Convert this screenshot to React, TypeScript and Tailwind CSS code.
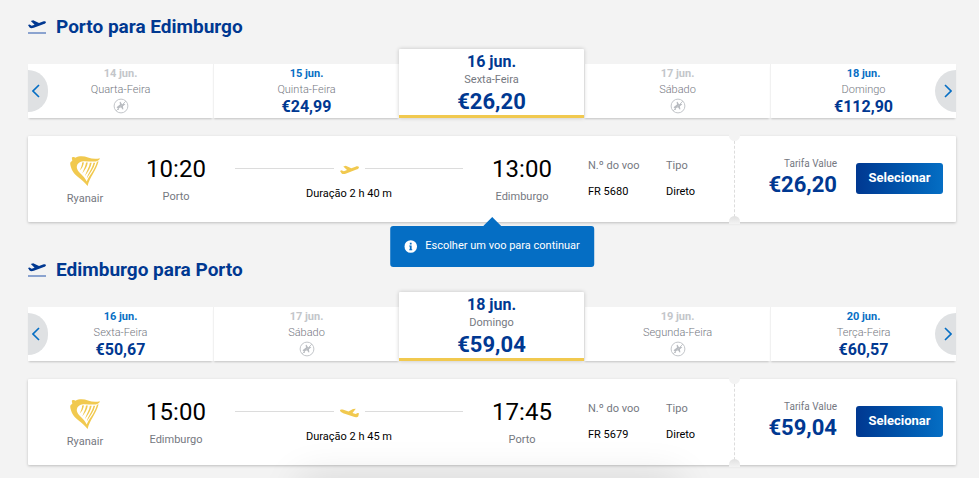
import React from "react";
import clsx from "clsx";

type Day = { date: string; weekday: string; price?: string; selected?: boolean };

type Flight = {
  title: string;
  days: Day[];
  departure: string;
  from: string;
  arrival: string;
  to: string;
  duration: string;
  number: string;
  price: string;
  landing?: boolean;
};

const flights: Flight[] = [
  {
    title: "Porto para Edimburgo",
    days: [
      { date: "14 jun.", weekday: "Quarta-Feira" },
      { date: "15 jun.", weekday: "Quinta-Feira", price: "€24,99" },
      { date: "16 jun.", weekday: "Sexta-Feira", price: "€26,20", selected: true },
      { date: "17 jun.", weekday: "Sábado" },
      { date: "18 jun.", weekday: "Domingo", price: "€112,90" },
    ],
    departure: "10:20",
    from: "Porto",
    arrival: "13:00",
    to: "Edimburgo",
    duration: "Duração 2 h 40 m",
    number: "FR 5680",
    price: "€26,20",
  },
  {
    title: "Edimburgo para Porto",
    days: [
      { date: "16 jun.", weekday: "Sexta-Feira", price: "€50,67" },
      { date: "17 jun.", weekday: "Sábado" },
      { date: "18 jun.", weekday: "Domingo", price: "€59,04", selected: true },
      { date: "19 jun.", weekday: "Segunda-Feira" },
      { date: "20 jun.", weekday: "Terça-Feira", price: "€60,57" },
    ],
    departure: "15:00",
    from: "Edimburgo",
    arrival: "17:45",
    to: "Porto",
    duration: "Duração 2 h 45 m",
    number: "FR 5679",
    price: "€59,04",
    landing: true,
  },
];

function TakeoffIcon() {
  return (
    <svg viewBox="0 0 18 14" className="h-[14px] w-[18px]" aria-hidden="true">
      <path
        fill="#003891"
        d="M0 5 1.600 4.600 3.600 5.700 6.600 4.700 2.800 1 5.200.2 11 3.100 15 1.600C16.400 1.100 17.600 1 17.900 1.900 18.100 2.700 17.200 3.600 15.900 4.100L5.800 7.800C4.200 8.400 2.500 8.600 1.600 7.500Z"
      />
      <path fill="#8ba3cf" d="M0 12h18v2H0z" />
    </svg>
  );
}

function PlaneIcon({ landing }: { landing?: boolean }) {
  return (
    <svg viewBox="0 0 19 10" className="mt-[3px] h-[10px] w-[19px]" aria-hidden="true">
      <path
        fill="#f1c94f"
        d={
          landing
            ? "M0 2.200C.2 1.100 2.200 1.300 3.500 1.800L8.500 3.500 13 .9 15.800.7 12.500 4.900 15.600 6 17.600 5 19 5.300 18.300 8.200C17.600 9.300 15.500 9.400 13.800 8.800L3.200 5.200C1.300 4.500-.2 3.300 0 2.200Z"
            : "M0 6 1.500 5.300 3.800 6.200 7 5 3.300 1.500 5.800.7 11.300 3.300 15.500 1.700C17 1.200 18.600 1.200 18.900 2.100 19.200 3.100 17.900 3.900 16.400 4.500L6.200 8.500C4.500 9.200 2.500 9.300 1.700 8.500Z"
        }
      />
    </svg>
  );
}

function NoFlightIcon() {
  return (
    <svg viewBox="0 0 16 16" className="size-4" role="img" aria-label="Sem voos">
      <circle cx="8" cy="8" r="6.900" fill="none" stroke="#c3c6ca" />
      <path
        fill="#b8bbc0"
        d="M3.500 9.200 7 6.600 6.600 3.900 7.500 3.800 9 6.200 11.500 5.700 12.300 6.300 9.900 8.300 10.400 11.300 9.600 11.500 8 9.300 6 10.300 5.700 12 4.900 11.900 4.700 10.300Z"
      />
      <path stroke="#c3c6ca" d="m3.100 12.900 9.800-9.800" />
    </svg>
  );
}

function HarpLogo() {
  return (
    <svg viewBox="0 0 30 30" className="h-[30px] w-[30px]" aria-hidden="true">
      <g fill="#f1c94f">
        <path d="M1.800 2C2 .8 4.200.6 5.500 1.700 9-.2 14 0 18 1.500 22 3 26 3.300 30 2.200 29.400 4.300 26.800 5.600 23.600 5.600 18 5.700 13 4.300 9.800 6.200 7 7.800 6.200 10.500 7.200 13 8.600 17 13.500 19 16.800 25.500 18.600 20 23.600 16.500 27 5.800L28.600 5.200C26 15 19.700 21 17.600 30 12 22.500 4.500 20 2 14 .9 11.300-.2 8 .4 6.500.7 5.700 2 5.500 2.300 4.600Z" />
        <path d="M13.900 6.300C13.700 9 12.500 12 9.800 14.500 11 11.500 12.300 8.500 12.100 6.500Z" />
        <path d="M17.800 6.500C17.200 10.500 15.200 14 12.200 17.500 13.700 13.500 15.900 9.500 16 6.600Z" />
        <path d="M21.700 6.700C20.800 11.500 18 16 14.800 20.300 16.300 15.500 19.500 11 19.900 6.700Z" />
        <path d="M25.200 6.700C23.800 12.500 20.200 17 16.700 22.500 18 17.500 22.400 12 23.500 6.800Z" />
      </g>
    </svg>
  );
}

function Arrow({ next }: { next?: boolean }) {
  return (
    <button
      type="button"
      aria-label={next ? "Próximos dias" : "Dias anteriores"}
      className={clsx(
        "absolute bottom-[6px] flex h-[42px] items-center justify-center bg-[#dfe1e3]",
        next ? "right-0 w-[21px] rounded-l-full pl-1" : "left-0 w-5 rounded-r-full pr-1"
      )}
    >
      <svg viewBox="0 0 8 14" className="h-[14px] w-2" fill="none" stroke="#056ec4" strokeWidth="1.600">
        <path d={next ? "m1 1 6 6-6 6" : "M7 1 1 7l6 6"} />
      </svg>
    </button>
  );
}

function DayTab({ day }: { day: Day }) {
  if (day.selected) {
    return (
      <button
        type="button"
        aria-pressed="true"
        className="relative flex h-[69px] flex-1 flex-col items-center rounded-t-[1px] border-b-[3px] border-[#f1c94f] bg-white pt-[3px] text-[#003891] shadow-[0_0_4px_rgba(0,0,0,0.2)]"
      >
        <span className="text-[16px] font-bold leading-5">{day.date}</span>
        <span className="text-[11px] leading-4 text-[#75787f]">{day.weekday}</span>
        <span className="text-[22px] font-bold leading-7">{day.price}</span>
      </button>
    );
  }
  return (
    <button
      type="button"
      disabled={!day.price}
      className="flex h-[54px] flex-1 flex-col items-center border-l border-[#f1f1f1] bg-white pt-0.5 shadow-[0_2px_2px_-1px_rgba(0,0,0,0.2)] first:border-l-0"
    >
      <span
        className={clsx(
          "text-[11px] font-bold leading-4",
          day.price ? "text-[#056ec4]" : "text-[#c3c6ca]"
        )}
      >
        {day.date}
      </span>
      <span className="text-[11px] font-light leading-4 text-[#75787f]">{day.weekday}</span>
      {day.price ? (
        <span className="text-[16px] font-bold leading-[18px] text-[#003891]">{day.price}</span>
      ) : (
        <NoFlightIcon />
      )}
    </button>
  );
}

function Stop({ time, city }: { time: string; city: string }) {
  return (
    <div className="w-[68px] pt-[18px] text-center">
      <p className="text-[24px] leading-[30px]">{time}</p>
      <p className="mt-[5px] text-[11px] leading-4 text-[#75787f]">{city}</p>
    </div>
  );
}

function FlightCard({ flight, hint }: { flight: Flight; hint?: boolean }) {
  return (
    <div className="relative mt-[18px] flex h-[86px] rounded-[1px] bg-white text-black shadow-[0_1px_3px_rgba(0,0,0,0.22)]">
      <div className="flex w-[114px] flex-col items-center pt-5 text-[11px] leading-4 text-[#75787f]">
        <HarpLogo />
        <p className="mt-[5px]">Ryanair</p>
      </div>
      <Stop time={flight.departure} city={flight.from} />
      <div className="mx-[25px] flex-1 pt-[26px] text-center">
        <div className="flex h-4 items-start gap-[6px]">
          <span className="mt-[6px] h-px flex-1 bg-[#dcdcdc]" />
          <PlaneIcon landing={flight.landing} />
          <span className="mt-[6px] h-px flex-1 bg-[#dcdcdc]" />
        </div>
        <p className="mt-2 text-[11px] leading-4">{flight.duration}</p>
      </div>
      <Stop time={flight.arrival} city={flight.to} />
      <dl className="ml-8 flex pt-[22px] text-[11px] leading-4">
        <div className="w-[78px]">
          <dt className="text-[#75787f]">N.º do voo</dt>
          <dd className="mt-[10px]">{flight.number}</dd>
        </div>
        <div className="w-[68px]">
          <dt className="text-[#75787f]">Tipo</dt>
          <dd className="mt-[10px]">Direto</dd>
        </div>
      </dl>
      <div className="relative flex w-[222px] items-center justify-end gap-[19px] border-l border-dashed border-[#dcdcdc] pb-0.5 pr-[13px]">
        <span className="absolute -left-[6px] -top-[2px] h-[7px] w-[11px] rounded-b-full bg-[#f3f3f3]" />
        <span className="absolute -bottom-[2px] -left-[6px] h-2 w-[11px] rounded-t-full bg-linear-to-b from-[#e0e0e0] to-[#f3f3f3]" />
        <div className="text-right">
          <p className="text-[10px] leading-[14px] text-[#75787f]">Tarifa Value</p>
          <p className="text-[22px] font-bold leading-7 text-[#003891]">{flight.price}</p>
        </div>
        <button
          type="button"
          className="h-[31px] w-[87px] rounded-[3px] bg-linear-to-r from-[#003891] to-[#056ec4] text-[13px] font-bold text-white"
        >
          Selecionar
        </button>
      </div>
      {hint && (
        <div
          role="tooltip"
          className="absolute left-1/2 top-full mt-1 flex h-[41px] -translate-x-1/2 items-center gap-2 whitespace-nowrap rounded-[3px] bg-[#056ec4] px-[14px] text-[11px] text-white"
        >
          <svg viewBox="0 0 18 9" className="absolute -top-[9px] left-1/2 h-[9px] w-[18px] -translate-x-1/2">
            <path fill="#056ec4" d="m0 9 9-9 9 9z" />
          </svg>
          <svg viewBox="0 0 13 13" className="size-[13px]" aria-hidden="true">
            <circle cx="6.500" cy="6.500" r="6.300" fill="#fff" />
            <path fill="#056ec4" d="M5.600 2.700h1.800v1.700H5.600zM5 5.500h2.400v3.800H8v1H5v-1h.6V6.500H5z" />
          </svg>
          Escolher um voo para continuar
        </div>
      )}
    </div>
  );
}

export default function App() {
  return (
    <main className="relative min-h-screen overflow-hidden bg-[#f3f3f3] pb-[13px] pl-7 pr-[23px] pt-[15px] font-['Roboto',sans-serif]">
      <div className="space-y-9">
        {flights.map((flight, i) => (
          <section key={flight.title}>
            <h2 className="flex items-center gap-[10px] text-[19px] font-bold leading-6 text-[#003891]">
              <TakeoffIcon />
              {flight.title}
            </h2>
            <div className="relative mt-[10px] flex items-end">
              {flight.days.map((day) => (
                <DayTab key={day.date} day={day} />
              ))}
              <Arrow />
              <Arrow next />
            </div>
            <FlightCard flight={flight} hint={i === 0} />
          </section>
        ))}
      </div>
      <div className="pointer-events-none absolute left-1/2 top-full h-10 w-[380px] -translate-x-1/2 shadow-[0_0_40px_rgba(0,0,0,0.12)]" />
    </main>
  );
}
